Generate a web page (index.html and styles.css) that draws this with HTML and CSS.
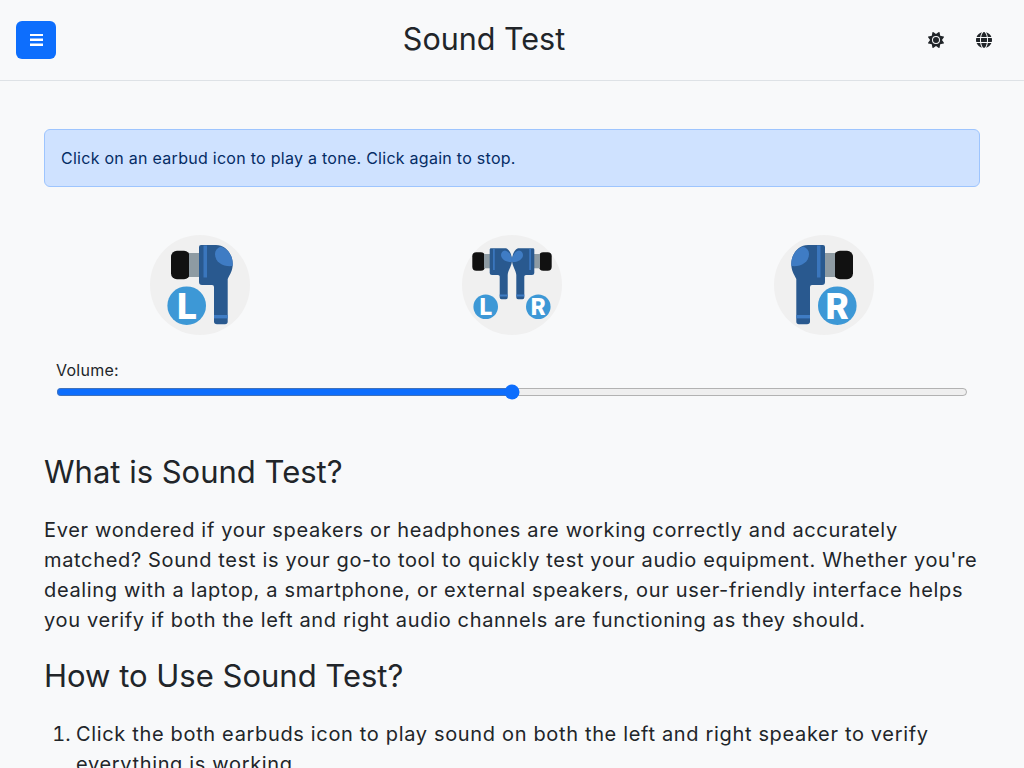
FILE: index.html
```html
<!DOCTYPE html>
<html lang="en">
<head>
<meta charset="utf-8">
<title>Sound Test</title>
<link rel="stylesheet" href="styles.css">
</head>
<body>
<svg class="defs" width="0" height="0" aria-hidden="true">
  <defs>
    <g id="bud">
      <rect x="21" y="15.7" width="19" height="28.6" rx="6" fill="#111"/>
      <rect x="39" y="18" width="11" height="24" fill="#8e9ba3"/>
      <path d="M51 10H66C75.5 10 82.7 19 82.7 29C82.7 36 80 39 77.7 44V86.5Q77.7 89.3 75 89.3H67Q64 89.3 64 86.5V52Q64 50 62 50H52Q49 50 49 47V12Q49 10 51 10Z" fill="#29598f"/>
      <path d="M71 11.500C77.500 13.500 82.700 20 82.700 29C82.700 29.800 82.600 30.500 82.500 31C74 32 65 28 65 19C65 15.500 67 12.800 71 11.500Z" fill="#3f7cc4"/>
      <rect x="53.500" y="10.500" width="3.500" height="32" fill="#3a76bd"/>
      <rect x="64" y="80" width="13.700" height="3.400" fill="#3f7cc4"/>
    </g>
    <g id="bud-small">
      <rect x="10.300" y="17.300" width="12.500" height="18.400" rx="4" fill="#111"/>
      <rect x="22" y="19" width="6" height="14.300" fill="#8e9ba3"/>
      <path d="M29 13.300H44C47.500 14.500 50 20 50 25C50 31 46 35 45.700 40V62.500Q45.700 64.300 44 64.300H39.500Q37.700 64.300 37.700 62.500V41.500Q37.700 40 36 40H30Q27.700 40 27.700 38V14.600Q27.700 13.300 29 13.300Z" fill="#29598f"/>
      <path d="M43 15.500C46.800 16 50 21 50 25C50 25.800 49.900 26.400 49.700 27C44 27.500 39 24 39 20C39 17.800 40.500 16 43 15.500Z" fill="#3f7cc4"/>
      <rect x="31" y="14" width="1.800" height="21" fill="#3a76bd"/>
      <rect x="37.700" y="59.500" width="8" height="2" fill="#3f7cc4"/>
    </g>
  </defs>
</svg>
<header class="navbar">
  <button class="menu-btn" aria-label="Menu">
    <svg class="bars" viewBox="0 1 13 13"><path d="M0 0.500H13V3.100H0ZM0 5.500H13V8.100H0ZM0 10.500H13V13.100H0Z" fill="#fff"/></svg>
  </button>
  <h1 class="title">Sound Test</h1>
  <button class="icon-btn" aria-label="Theme">
    <svg class="nav-icon" viewBox="0 0 512 512"><path d="M361.5 1.2c5 2.1 8.6 6.6 9.6 11.9L391 121l107.9 19.8c5.3 1 9.8 4.6 11.9 9.6s1.5 10.7-1.6 15.2L446.9 256l62.3 90.3c3.1 4.5 3.7 10.2 1.6 15.2s-6.6 8.6-11.9 9.6L391 391 371.1 498.9c-1 5.3-4.6 9.8-9.6 11.9s-10.7 1.5-15.2-1.6L256 446.9l-90.3 62.3c-4.5 3.1-10.2 3.7-15.2 1.6s-8.6-6.6-9.6-11.9L121 391 13.1 371.1c-5.3-1-9.8-4.6-11.9-9.6s-1.5-10.7 1.6-15.2L65.1 256 2.8 165.7c-3.1-4.5-3.7-10.2-1.6-15.2s6.6-8.6 11.9-9.6L121 121 140.9 13.1c1-5.3 4.6-9.8 9.6-11.9s10.7-1.5 15.2 1.6L256 65.1 346.3 2.8c4.5-3.1 10.2-3.7 15.2-1.6zM160 256a96 96 0 1 1 192 0 96 96 0 1 1 -192 0zm224 0a128 128 0 1 0 -256 0 128 128 0 1 0 256 0z"/></svg>
  </button>
  <button class="icon-btn" aria-label="Language">
    <svg class="nav-icon" viewBox="0 0 512 512"><path d="M352 256c0 22.2-1.2 43.6-3.3 64H163.3c-2.2-20.4-3.3-41.8-3.3-64s1.2-43.6 3.3-64H348.7c2.2 20.4 3.3 41.8 3.3 64zm28.8-64H503.9c5.3 20.5 8.1 41.9 8.1 64s-2.8 43.5-8.1 64H380.8c2.1-20.6 3.2-42 3.2-64s-1.1-43.4-3.2-64zm112.6-32H376.7c-10-63.9-29.8-117.4-55.3-151.6c78.3 20.7 142 77.5 171.9 151.6zm-149.1 0H167.7c6.1-36.4 15.5-68.6 27-94.7c10.5-23.6 22.2-40.7 33.5-51.5C239.4 3.2 248.7 0 256 0s16.6 3.2 27.8 13.8c11.3 10.8 23 27.9 33.5 51.5c11.6 26 20.9 58.2 27 94.7zm-209 0H18.6C48.6 85.9 112.2 29.1 190.6 8.4C165.1 42.6 145.3 96.1 135.3 160zM8.1 192H131.2c-2.1 20.6-3.2 42-3.2 64s1.1 43.4 3.2 64H8.1C2.8 299.5 0 278.1 0 256s2.8-43.5 8.1-64zM194.7 446.6c-11.6-26-20.9-58.2-27-94.6H344.3c-6.1 36.4-15.5 68.6-27 94.6c-10.5 23.6-22.2 40.7-33.5 51.5C272.6 508.8 263.3 512 256 512s-16.6-3.2-27.8-13.8c-11.3-10.8-23-27.9-33.5-51.5zM135.3 352c10 63.9 29.8 117.4 55.3 151.6C112.2 482.9 48.6 426.1 18.6 352H135.3zm358.1 0c-30 74.1-93.6 130.9-171.9 151.6c25.5-34.2 45.2-87.7 55.3-151.6H493.4z"/></svg>
  </button>
</header>
<main class="content">
  <div class="alert">Click on an earbud icon to play a tone. Click again to stop.</div>
  <div class="buds">
    <button class="bud-btn" aria-label="Left">
      <svg class="bud-icon" viewBox="0 0 100 100">
        <use href="#bud"/>
        <circle cx="36.700" cy="70.700" r="19.300" fill="#3d98d6"/>
        <text class="bud-letter" x="36.700" y="83.800" font-size="36">L</text>
      </svg>
    </button>
    <button class="bud-btn" aria-label="Both">
      <svg class="bud-icon" viewBox="0 0 100 100">
        <use href="#bud-small"/>
        <use href="#bud-small" transform="translate(100 0) scale(-1 1)"/>
        <circle cx="23.700" cy="71.700" r="12.300" fill="#3d98d6"/>
        <circle cx="76.300" cy="71.700" r="12.300" fill="#3d98d6"/>
        <text class="bud-letter" x="23.700" y="80" font-size="23">L</text>
        <text class="bud-letter" x="76.300" y="80" font-size="23">R</text>
      </svg>
    </button>
    <button class="bud-btn" aria-label="Right">
      <svg class="bud-icon" viewBox="0 0 100 100">
        <use href="#bud" transform="translate(100 0) scale(-1 1)"/>
        <circle cx="63.300" cy="70.700" r="19.300" fill="#3d98d6"/>
        <text class="bud-letter" x="63.300" y="83.800" font-size="36">R</text>
      </svg>
    </button>
  </div>
  <div class="volume">
    <label class="volume-label" for="vol">Volume:</label>
    <input class="volume-range" id="vol" type="range" min="0" max="100" value="50">
  </div>
  <h2 class="heading">What is Sound Test?</h2>
  <p class="para">Ever wondered if your speakers or headphones are working correctly and accurately matched? Sound test is your go-to tool to quickly test your audio equipment. Whether you're dealing with a laptop, a smartphone, or external speakers, our user-friendly interface helps you verify if both the left and right audio channels are functioning as they should.</p>
  <h2 class="heading">How to Use Sound Test?</h2>
  <ol class="steps">
    <li>Click the both earbuds icon to play sound on both the left and right speaker to verify everything is working.</li>
    <li>Click the left earbud icon to play sound on the left speaker only.</li>
    <li>Click the right earbud icon to play sound on the right speaker only.</li>
  </ol>
</main>
</body>
</html>
```

FILE: styles.css
```css
* { box-sizing: border-box; }
html, body { margin: 0; padding: 0; }
body {
  background: #f8f9fa;
  color: #212529;
  font-family: Inter, "Liberation Sans", sans-serif;
  font-size: 16px;
  line-height: 1.5;
}
.defs { position: absolute; }
.navbar {
  display: flex;
  align-items: center;
  height: 81px;
  padding: 0 16px;
  border-bottom: 1px solid #dee2e6;
}
.menu-btn {
  width: 40px;
  height: 38px;
  padding: 0;
  border: 0;
  border-radius: 6px;
  background: #0d6efd;
  display: flex;
  align-items: center;
  justify-content: center;
}
.bars { width: 13px; height: 13px; display: block; }
.title {
  flex: 1;
  margin: 0 0 1px;
  text-align: center;
  font-size: 30.5px;
  font-weight: 400;
  line-height: 1.2;
}
.icon-btn {
  width: 48px;
  height: 38px;
  padding: 0;
  border: 0;
  background: none;
  display: flex;
  align-items: center;
  justify-content: center;
}
.nav-icon { width: 16px; height: 16px; fill: #212529; display: block; }
.content { padding: 48px 44px 0; }
.alert {
  padding: 15.500px 16px 16.500px;
  border: 1px solid #9ec5fe;
  border-radius: 6px;
  background: #cfe2ff;
  color: #052c65;
  letter-spacing: 0.27px;
}
.buds {
  display: grid;
  grid-template-columns: repeat(3, 1fr);
  margin-top: 48px;
}
.bud-btn {
  justify-self: center;
  width: 100px;
  height: 100px;
  padding: 0;
  border: 0;
  border-radius: 50%;
  background: #f0f0f0;
}
.bud-icon { width: 100px; height: 100px; display: block; }
.bud-letter {
  fill: #fff;
  font-family: Roboto, sans-serif;
  font-weight: 900;
  text-anchor: middle;
}
.volume { padding: 0 12px; margin-top: 23px; }
.volume-label { display: block; margin-bottom: 2px; letter-spacing: 0.27px; }
.volume-range {
  display: block;
  width: 100%;
  height: 16px;
  margin: 0;
  accent-color: #0d6efd;
}
.heading {
  margin: 53px 0 24px;
  font-size: 31px;
  font-weight: 400;
  line-height: 38px;
}
.para { margin: 0; font-size: 20px; line-height: 30px; letter-spacing: 0.66px; }
.para + .heading { margin-top: 22px; }
.steps { margin: 0; padding-left: 32px; font-size: 20px; line-height: 30px; letter-spacing: 0.66px; }
.steps li::marker { letter-spacing: 0; }
```
